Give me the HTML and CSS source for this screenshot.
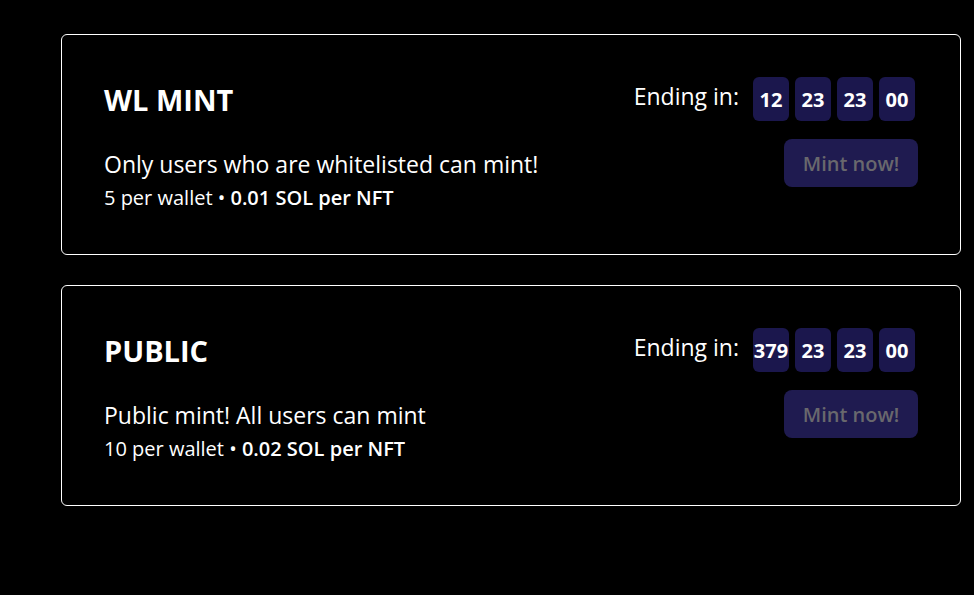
FILE: index.html
```html
<!DOCTYPE html>
<html lang="en">
<head>
<meta charset="utf-8">
<title>Mint</title>
<link rel="stylesheet" href="styles.css">
</head>
<body>
<main class="groups">
  <section class="card">
    <div class="info">
      <h2 class="title">WL MINT</h2>
      <p class="description">Only users who are whitelisted can mint!</p>
      <p class="price">5 per wallet • <strong>0.01 SOL per NFT</strong></p>
    </div>
    <div class="actions">
      <div class="countdown">
        <span class="label">Ending in:</span>
        <div class="digits"><span class="digit">12</span><span class="digit">23</span><span class="digit">23</span><span class="digit">00</span></div>
      </div>
      <button class="mint" type="button" disabled>Mint now!</button>
    </div>
  </section>
  <section class="card">
    <div class="info">
      <h2 class="title">PUBLIC</h2>
      <p class="description">Public mint! All users can mint</p>
      <p class="price">10 per wallet • <strong>0.02 SOL per NFT</strong></p>
    </div>
    <div class="actions">
      <div class="countdown">
        <span class="label">Ending in:</span>
        <div class="digits"><span class="digit">379</span><span class="digit">23</span><span class="digit">23</span><span class="digit">00</span></div>
      </div>
      <button class="mint" type="button" disabled>Mint now!</button>
    </div>
  </section>
</main>
</body>
</html>
```
FILE: styles.css
```css
* { box-sizing: border-box; }
body {
  margin: 0;
  background: #000;
  color: #fff;
  font-family: "Segoe UI", "Open Sans", sans-serif;
}
.groups {
  display: flex;
  flex-direction: column;
  gap: 30px;
  padding: 34px 13px 34px 61px;
}
.card {
  display: flex;
  justify-content: space-between;
  border: 1px solid #fff;
  border-radius: 6px;
  padding: 42px 42px 40px;
}
.title {
  margin: 0 0 25px;
  font-size: 29px;
  line-height: 46px;
  font-weight: 700;
}
.description {
  margin: 0 0 2px;
  font-size: 23px;
  line-height: 32px;
}
.price {
  margin: 0;
  font-size: 20px;
  line-height: 32px;
}
.price strong { font-weight: 600; }
.actions {
  display: flex;
  flex-direction: column;
  align-items: flex-end;
  gap: 18px;
}
.countdown {
  display: flex;
  gap: 14px;
  padding-right: 3px;
}
.label {
  font-size: 23px;
  line-height: 38px;
}
.digits {
  display: flex;
  gap: 6px;
}
.digit {
  display: flex;
  align-items: center;
  justify-content: center;
  width: 36px;
  height: 44px;
  border-radius: 6px;
  background: #1b174d;
  font-size: 20px;
  font-weight: 700;
}
.mint {
  width: 134px;
  height: 48px;
  border: 0;
  border-radius: 8px;
  padding: 0;
  background: #1f1b50;
  color: #69686d;
  font: inherit;
  font-size: 20px;
  font-weight: 600;
}
```
